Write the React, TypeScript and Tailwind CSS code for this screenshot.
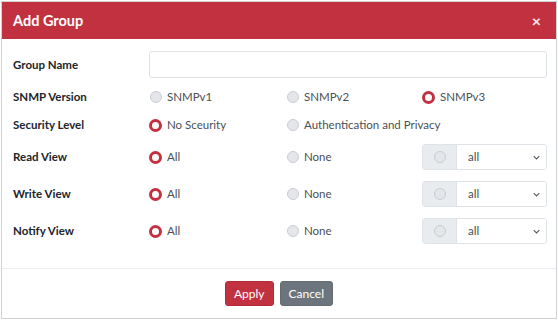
import React from 'react';

const font = { fontFamily: 'Lato, "Noto Sans", sans-serif' };

const Radio = ({ checked = false }: { checked?: boolean }) =>
    checked ? (
        <span className="inline-block h-[13px] w-[13px] shrink-0 rounded-full border-[3.5px] border-[#c23140] bg-white" />
    ) : (
        <span className="inline-block h-[12px] w-[12px] shrink-0 rounded-full border border-[#c9cdd2] bg-[#e4e6e9]" />
    );

const Option = ({ label, checked = false }: { label: string; checked?: boolean }) => (
    <div className={`flex items-center text-[11.5px] text-[#4a4f55] ${checked ? 'gap-[5px]' : 'gap-[5px] pl-[1px]'}`}>
        <Radio checked={checked} />
        <span>{label}</span>
    </div>
);

const Label = ({ children }: { children: React.ReactNode }) => (
    <div className="text-[11.5px] font-bold text-[#212529]">{children}</div>
);

const ViewSelect = () => (
    <div className="flex h-[26px] w-[125px] overflow-hidden rounded-[3px] border border-[#dfe2e6]">
        <div className="flex w-[34px] items-center justify-center border-r border-[#dfe2e6] bg-[#e9ecef]">
            <Radio />
        </div>
        <div className="flex flex-1 items-center justify-between bg-white pl-[11px] pr-[6px] text-[11.5px] text-[#4a4f55]">
            <span>all</span>
            <svg viewBox="0 0 10 6" className="h-[5px] w-[7px]" fill="none" stroke="#555" strokeWidth="1.5">
                <path d="M1 1l4 4 4-4" />
            </svg>
        </div>
    </div>
);

const Row = ({ label, className, children }: { label: string; className: string; children: React.ReactNode }) => (
    <div className={`grid grid-cols-[136px_137px_136px_125px] items-center ${className}`}>
        <Label>{label}</Label>
        {children}
    </div>
);

export default function App() {
    return (
        <div className="h-[320px] w-[558px] bg-white p-[1px]" style={font}>
            <div className="flex h-[318px] w-[556px] flex-col border border-[#cfd2d6] bg-white">
                <div className="flex h-[37px] shrink-0 items-center justify-between bg-[#c23140] pl-[11px] pr-[15px]">
                    <span className="text-[14.5px] font-bold text-white">Add Group</span>
                    <span className="text-[16px] font-bold leading-none text-white/90">×</span>
                </div>
                <div className="flex flex-col pl-[11px] pr-[7px] pt-[12px]">
                    <Row label="Group Name" className="h-[27px]">
                        <div className="col-span-3 h-[27px] rounded-[3px] border border-[#dfe2e6] bg-white" />
                    </Row>
                    <Row label="SNMP Version" className="mt-[9px] h-[20px]">
                        <Option label="SNMPv1" />
                        <Option label="SNMPv2" />
                        <Option label="SNMPv3" checked />
                    </Row>
                    <Row label="Security Level" className="mt-[8px] h-[20px]">
                        <Option label="No Sceurity" checked />
                        <div className="col-span-2">
                            <Option label="Authentication and Privacy" />
                        </div>
                    </Row>
                    <Row label="Read View" className="mt-[9px] h-[26px]">
                        <Option label="All" checked />
                        <Option label="None" />
                        <ViewSelect />
                    </Row>
                    <Row label="Write View" className="mt-[11px] h-[26px]">
                        <Option label="All" checked />
                        <Option label="None" />
                        <ViewSelect />
                    </Row>
                    <Row label="Notify View" className="mt-[11px] h-[26px]">
                        <Option label="All" checked />
                        <Option label="None" />
                        <ViewSelect />
                    </Row>
                </div>
                <div className="mt-auto flex h-[50px] items-center justify-center gap-[6px] border-t border-[#eceef0]">
                    <button className="h-[25px] rounded-[3px] border border-[#b12a37] bg-[#c23140] px-[8px] text-[12px] text-white">
                        Apply
                    </button>
                    <button className="h-[25px] rounded-[3px] border border-[#666b70] bg-[#6c757d] px-[8px] text-[12px] text-white">
                        Cancel
                    </button>
                </div>
            </div>
        </div>
    );
}
